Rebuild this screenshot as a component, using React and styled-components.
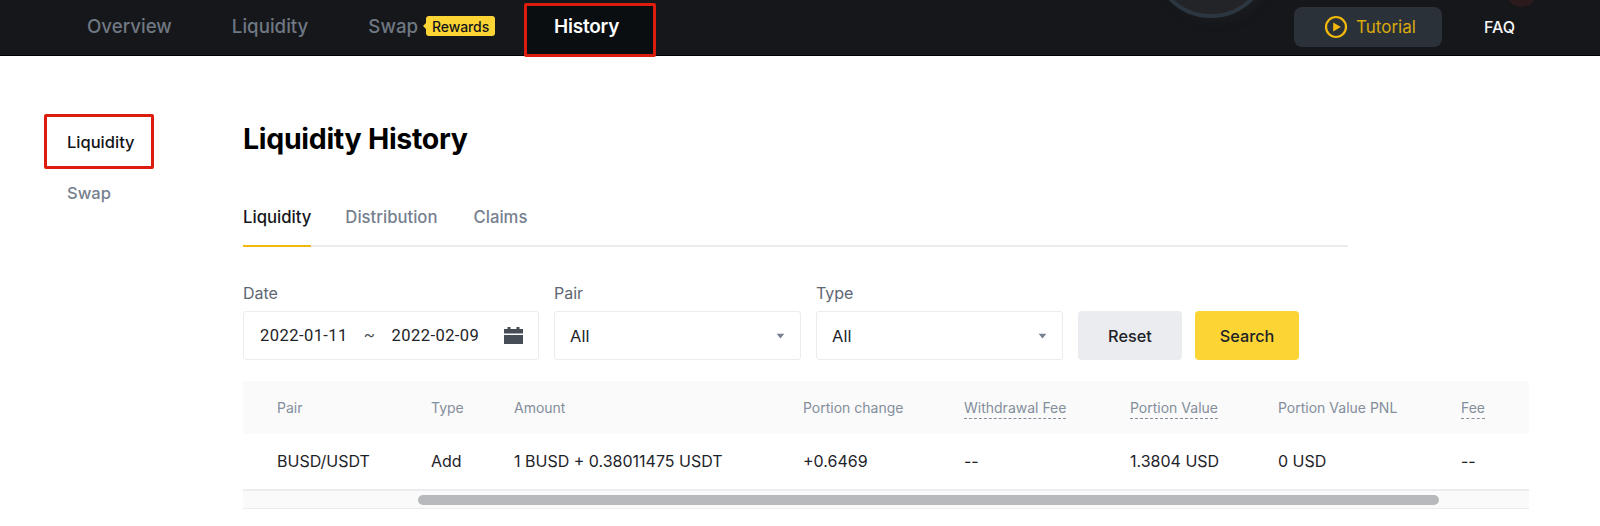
import styled, { createGlobalStyle } from "styled-components";

const GlobalStyle = createGlobalStyle`
  html, body {
    margin: 0;
    background: #fff;
    font-family: "Inter", "Liberation Sans", sans-serif;
    overflow: hidden;
  }
  * { box-sizing: border-box; }
`;

const columns = [
  { label: "Pair", value: "BUSD/USDT" },
  { label: "Type", value: "Add" },
  { label: "Amount", value: "1 BUSD + 0.38011475 USDT" },
  { label: "Portion change", value: "+0.6469" },
  { label: "Withdrawal Fee", value: "--", hint: true },
  { label: "Portion Value", value: "1.3804 USD", hint: true },
  { label: "Portion Value PNL", value: "0 USD" },
  { label: "Fee", value: "--", hint: true },
];

function PlayIcon() {
  return (
    <svg width="24" height="24" viewBox="0 0 24 24" fill="none">
      <circle cx="12" cy="12" r="10" stroke="#f0b90b" strokeWidth="2.2" />
      <path d="M9.2 7.4 16.8 12l-7.6 4.6z" fill="#f0b90b" />
    </svg>
  );
}

function CalendarIcon() {
  return (
    <svg width="19" height="17" viewBox="0 0 19 17" fill="#474d57">
      <path d="M3.5 0h3v2h6V0h3v2H19v4.5H0V2h3.5z" />
      <path d="M0 8h19v9H0z" />
    </svg>
  );
}

function Caret() {
  return (
    <svg width="9" height="6" viewBox="0 0 10 7" fill="#76808f">
      <path d="M0.5 0.8h9L5 6.4z" />
    </svg>
  );
}

export default function App() {
  return (
    <>
      <GlobalStyle />
      <Header>
        <Nav>
          <NavItem>Overview</NavItem>
          <NavItem>Liquidity</NavItem>
          <NavItem>
            Swap
            <RewardBadge>Rewards</RewardBadge>
          </NavItem>
          <HistoryItem>History</HistoryItem>
        </Nav>
        <Wheel />
        <RedGlow />
        <TutorialButton>
          <PlayIcon />
          Tutorial
        </TutorialButton>
        <FaqLink>FAQ</FaqLink>
      </Header>
      <Page>
        <Sidebar>
          <SideItem $active>Liquidity</SideItem>
          <SideItem>Swap</SideItem>
        </Sidebar>
        <Main>
          <Title>Liquidity History</Title>
          <Tabs>
            <Tab $active>Liquidity</Tab>
            <Tab>Distribution</Tab>
            <Tab>Claims</Tab>
          </Tabs>
          <Filters>
            <Field>
              <FieldLabel>Date</FieldLabel>
              <DateInput>
                <span>2022-01-11</span>
                <Tilde>~</Tilde>
                <span>2022-02-09</span>
                <CalendarIcon />
              </DateInput>
            </Field>
            <Field>
              <FieldLabel>Pair</FieldLabel>
              <SelectBox>
                All
                <Caret />
              </SelectBox>
            </Field>
            <Field>
              <FieldLabel>Type</FieldLabel>
              <SelectBox>
                All
                <Caret />
              </SelectBox>
            </Field>
            <ActionButton>Reset</ActionButton>
            <ActionButton $primary>Search</ActionButton>
          </Filters>
          <Table>
            <HeadRow>
              {columns.map((c) => (
                <HeadCell key={c.label}>
                  <HeadLabel $hint={c.hint}>{c.label}</HeadLabel>
                </HeadCell>
              ))}
            </HeadRow>
            <BodyRow>
              {columns.map((c) => (
                <BodyCell key={c.label}>{c.value}</BodyCell>
              ))}
            </BodyRow>
            <ScrollTrack>
              <ScrollThumb />
            </ScrollTrack>
          </Table>
        </Main>
      </Page>
    </>
  );
}

const Header = styled.header`
  position: relative;
  height: 56px;
  background: #15171a;
  border-bottom: 1px solid #000;
  display: flex;
  align-items: center;
  padding-left: 87px;
`;

const Nav = styled.nav`
  display: flex;
  align-items: center;
  height: 100%;
`;

const NavItem = styled.div`
  display: flex;
  align-items: center;
  margin-top: -3px;
  color: #6f7783;
  font-size: 18.7px;
  font-weight: 500;
  margin-right: 60px;
  &:nth-child(3) { margin-right: 29px; }
`;

const RewardBadge = styled.span`
  position: relative;
  margin-left: 8px;
  height: 20px;
  width: 69px;
  background: #fcd535;
  border-radius: 3px;
  color: #14151a;
  font-size: 14px;
  font-weight: 500;
  letter-spacing: -0.1px;
  display: flex;
  align-items: center;
  justify-content: center;
  &::before {
    content: "";
    position: absolute;
    left: -3px;
    top: 7px;
    border-style: solid;
    border-width: 3px 3px 3px 0;
    border-color: transparent #fcd535 transparent transparent;
  }
`;

const HistoryItem = styled.div`
  width: 132px;
  height: 54px;
  margin-top: 5px;
  background: #0b0e11;
  border: 3px solid #dc1c0c;
  border-radius: 2px;
  color: #fff;
  font-size: 19px;
  font-weight: 600;
  letter-spacing: -0.2px;
  display: flex;
  align-items: center;
  justify-content: center;
  padding: 0 7px 8px 0;
  z-index: 1;
`;

const Wheel = styled.div`
  position: absolute;
  left: 1152px;
  top: -100px;
  width: 118px;
  height: 118px;
  border-radius: 50%;
  background: #232427;
  border: 4px solid #2b3640;
  box-shadow: 6px 4px 8px #1a1c1f;
`;

const RedGlow = styled.div`
  position: absolute;
  left: 1508px;
  top: -13px;
  width: 27px;
  height: 20px;
  border-radius: 50%;
  background: #2a1a1c;
`;

const TutorialButton = styled.div`
  width: 148px;
  height: 40px;
  margin-left: auto;
  margin-right: 42px;
  margin-top: -2px;
  padding-left: 4px;
  background: #2b3139;
  border-radius: 8px;
  color: #d9a90f;
  font-size: 17px;
  display: flex;
  align-items: center;
  justify-content: center;
  gap: 8px;
  z-index: 1;
`;

const FaqLink = styled.div`
  color: #f5f5f5;
  font-size: 16px;
  font-weight: 500;
  margin-right: 85px;
  margin-top: -2px;
`;

const Page = styled.div`
  display: flex;
  padding-left: 44px;
`;

const Sidebar = styled.aside`
  width: 199px;
  padding-top: 58px;
  display: flex;
  flex-direction: column;
`;

const SideItem = styled.div`
  width: 110px;
  height: 55px;
  display: flex;
  align-items: center;
  padding-left: ${(p) => (p.$active ? "20px" : "23px")};
  margin-bottom: -4px;
  color: ${(p) => (p.$active ? "#14151a" : "#76808f")};
  font-size: 16.5px;
  font-weight: 500;
  border: ${(p) => (p.$active ? "3px solid #dc1c0c" : "0")};
  border-radius: 2px;
`;

const Main = styled.main`
  width: 1286px;
  padding-top: 65px;
`;

const Title = styled.h1`
  margin: 0;
  height: 36px;
  line-height: 36px;
  font-size: 28.5px;
  font-weight: 700;
  letter-spacing: -0.3px;
  color: #000;
`;

const Tabs = styled.div`
  width: 1105px;
  margin-top: 43px;
  height: 47px;
  display: flex;
  gap: 34px;
  border-bottom: 2px solid #eaecef;
`;

const Tab = styled.div`
  height: 47px;
  padding-top: 7px;
  font-size: 16.7px;
  font-weight: 500;
  color: ${(p) => (p.$active ? "#14151a" : "#76808f")};
  border-bottom: 2px solid ${(p) => (p.$active ? "#f0b90b" : "transparent")};
  &:last-child { margin-left: 2px; }
`;

const Filters = styled.div`
  display: flex;
  align-items: flex-end;
  gap: 15px;
  margin-top: 36px;
`;

const Field = styled.div`
  display: flex;
  flex-direction: column;
  gap: 8px;
`;

const FieldLabel = styled.label`
  color: #5e6673;
  font-size: 16px;
  line-height: 20px;
`;

const DateInput = styled.div`
  width: 296px;
  height: 49px;
  border: 1px solid #eaecef;
  border-radius: 3px;
  padding: 0 15px 0 16px;
  display: flex;
  align-items: center;
  color: #1e2329;
  font-family: "Roboto", sans-serif;
  font-size: 16.5px;
  letter-spacing: 0.45px;
  svg { margin-left: auto; }
`;

const Tilde = styled.span`
  margin: 0 16px;
  color: #474d57;
`;

const SelectBox = styled.div`
  width: 247px;
  height: 49px;
  border: 1px solid #eaecef;
  border-radius: 3px;
  padding: 0 15px;
  display: flex;
  align-items: center;
  justify-content: space-between;
  color: #1e2329;
  font-size: 16.5px;
`;

const ActionButton = styled.button`
  width: 104px;
  height: 49px;
  margin-right: -2px;
  border: 0;
  border-radius: 4px;
  background: ${(p) => (p.$primary ? "#fcd535" : "#eaecef")};
  color: #1e2329;
  font-family: inherit;
  font-size: 16.3px;
  font-weight: 500;
`;

const Table = styled.div`
  margin-top: 21px;
`;

const gridColumns = "154px 83px 289px 161px 166px 148px 183px 1fr";

const HeadRow = styled.div`
  display: grid;
  grid-template-columns: ${gridColumns};
  height: 53px;
  padding-left: 34px;
  align-items: center;
  background: #fafafa;
`;

const HeadCell = styled.div`
  color: #848e9c;
  font-size: 14px;
`;

const HeadLabel = styled.span`
  padding-bottom: 2px;
  border-bottom: ${(p) => (p.$hint ? "1px dashed #848e9c" : "0")};
`;

const BodyRow = styled.div`
  display: grid;
  grid-template-columns: ${gridColumns};
  height: 57px;
  padding: 0 0 2px 34px;
  align-items: center;
  border-bottom: 2px solid #eaecef;
`;

const BodyCell = styled.div`
  color: #1e2329;
  font-size: 16px;
`;

const ScrollTrack = styled.div`
  height: 18px;
  background: #fafafa;
  border-bottom: 1px solid #eaecef;
  padding: 4px 0 0 175px;
`;

const ScrollThumb = styled.div`
  width: 1021px;
  height: 10px;
  border-radius: 5px;
  background: #b7b9bc;
`;
